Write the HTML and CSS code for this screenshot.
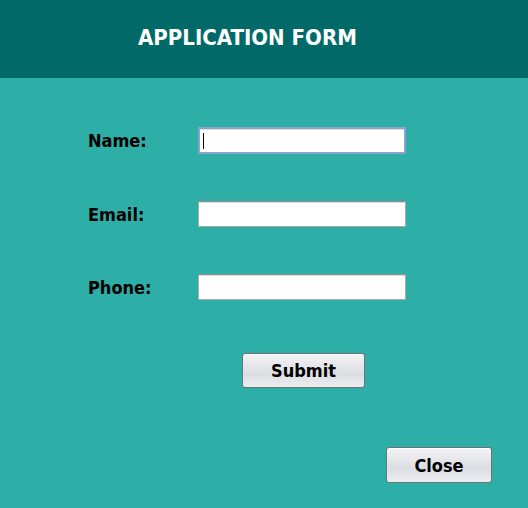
FILE: index.html
```html
<!DOCTYPE html>
<html>
<head>
<meta charset="utf-8">
<link rel="stylesheet" href="styles.css">
</head>
<body>
<div class="app">
  <header class="header"><h1 class="title">APPLICATION FORM</h1></header>
  <main class="content">
    <div class="form">
      <label class="label">Name:</label>
      <div class="field focused"><span class="caret"></span></div>
      <label class="label">Email:</label>
      <div class="field"></div>
      <label class="label">Phone:</label>
      <div class="field"></div>
    </div>
    <div class="submit-row"><button class="btn submit">Submit</button></div>
    <div class="close-row"><button class="btn close">Close</button></div>
  </main>
</div>
</body>
</html>
```
FILE: styles.css
```css
html, body { margin: 0; padding: 0; }
body { width: 528px; height: 508px; overflow: hidden; background: #2daea7; font-family: "DejaVu Sans Condensed", "DejaVu Sans", sans-serif; }
.app { display: flex; flex-direction: column; height: 508px; }
.header { height: 78px; background: #016a68; display: flex; align-items: center; padding-left: 138px; box-sizing: border-box; }
.title { margin: 0; color: #fff; font-size: 22px; font-weight: bold; letter-spacing: 0; line-height: 1; padding-bottom: 2px; }
.content { flex: 1; display: flex; flex-direction: column; }
.form { display: grid; grid-template-columns: 110px 208px; row-gap: 47px; padding: 49px 0 0 88px; align-items: center; }
.label { font-size: 18px; font-weight: bold; color: #000; }
.field { height: 26px; box-sizing: border-box; background: #fff; border: 1px solid #a9a9a9; border-top-color: #8f8f8f; box-shadow: inset 0 1px 0 #dcdcdc; position: relative; }
.field.focused { height: 27px; border: 2px solid #8aa3cc; box-shadow: inset 0 1px 0 #ddd; }
.caret { position: absolute; left: 3px; top: 4px; width: 1px; height: 16px; background: #000; }
.submit-row { display: flex; padding: 53px 0 0 242px; }
.btn { font-family: "DejaVu Sans Condensed", "DejaVu Sans", sans-serif; font-size: 18px; font-weight: bold; color: #000; border: 1px solid #6c7278; border-radius: 3px; background: linear-gradient(#f4f4f6, #dcdde2 60%, #eceef2); box-shadow: inset 0 1px 0 #fff; padding: 0; }
.submit { width: 123px; height: 35px; }
.close-row { display: flex; justify-content: flex-end; padding: 59px 36px 0 0; }
.close { width: 106px; height: 36px; }
```
